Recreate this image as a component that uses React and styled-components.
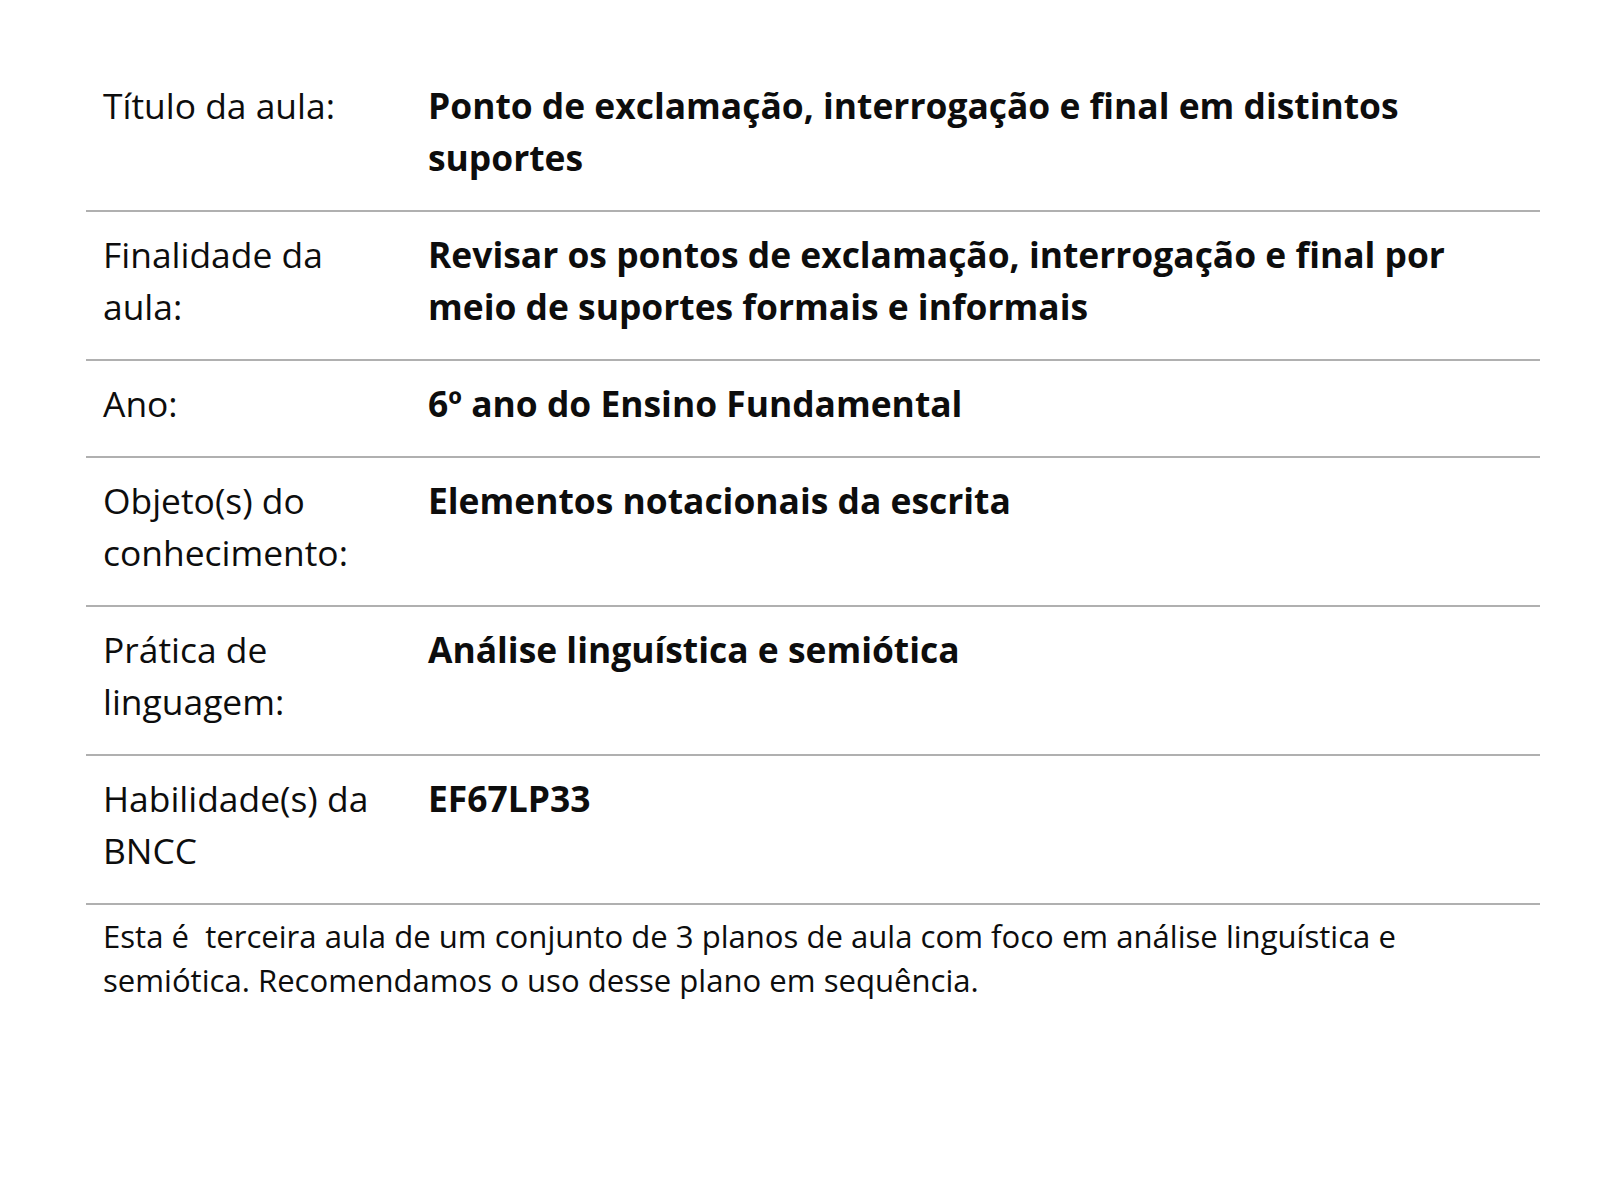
import React from "react";
import styled, { createGlobalStyle } from "styled-components";

const Global = createGlobalStyle`
  html, body { margin: 0; padding: 0; background: #ffffff; }
  body { font-family: "Open Sans", "Noto Sans", sans-serif; color: #0d0d0d; }
`;

const Page = styled.main`
  padding: 63px 60px 0 86px;
  width: 1454px;
`;

const Table = styled.div`
  display: flex;
  flex-direction: column;
`;

const Row = styled.div`
  display: grid;
  grid-template-columns: 325px 1fr;
  border-bottom: 2px solid #b0b0b0;
`;

const Cell = styled.div`
  padding: 16px 17px 27px 17px;
  font-size: 35.4px;
  line-height: 52px;
  font-weight: ${(p) => (p.$bold ? 700 : 400)};
  color: #0d0d0d;
`;

const Note = styled.p`
  margin: 0;
  padding: 10px 17px 0 17px;
  font-size: 31.1px;
  line-height: 43.5px;
  color: #0d0d0d;
`;

const rows = [
  ["Título da aula:", "Ponto de exclamação, interrogação e final em distintos suportes"],
  ["Finalidade da aula:", "Revisar os pontos de exclamação, interrogação e final por meio de suportes formais e informais"],
  ["Ano:", "6º ano do Ensino Fundamental"],
  ["Objeto(s) do conhecimento:", "Elementos notacionais da escrita"],
  ["Prática de linguagem:", "Análise linguística e semiótica"],
  ["Habilidade(s) da BNCC", "EF67LP33"],
];

export default function App() {
  return (
    <>
      <Global />
      <Page>
        <Table>
          {rows.map(([label, value]) => (
            <Row key={label}>
              <Cell>{label}</Cell>
              <Cell $bold>{value}</Cell>
            </Row>
          ))}
        </Table>
        <Note>
          Esta é&nbsp; terceira aula de um conjunto de 3 planos de aula com foco em análise linguística e semiótica. Recomendamos o uso desse plano em sequência.
        </Note>
      </Page>
    </>
  );
}
